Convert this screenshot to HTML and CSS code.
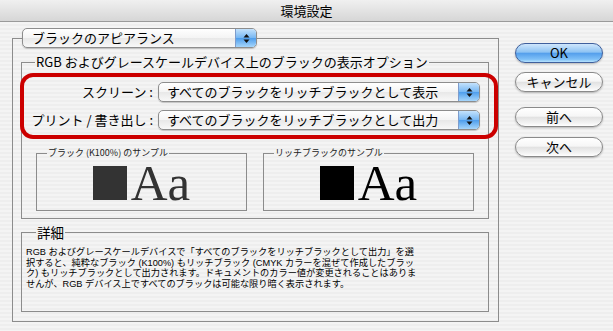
FILE: index.html
```html
<!DOCTYPE html>
<html lang="ja">
<head>
  <meta charset="UTF-8">
  <title>環境設定</title>
  <link rel="stylesheet" href="styles.css">
</head>
<body>
  <div class="titlebar">環境設定</div>

  <div class="content">
    <fieldset class="panel">
      <legend class="panel-legend">
        <div class="popup popup-section">
          <span class="popup-text">ブラックのアピアランス</span>
          <span class="popup-arrows">
            <svg width="7" height="11" viewBox="0 0 7 11"><polygon points="0.5,4.5 3.5,1 6.5,4.5"/><polygon points="0.5,6.5 3.5,10 6.5,6.5"/></svg>
          </span>
        </div>
      </legend>

      <fieldset class="group group-options">
        <legend>RGB およびグレースケールデバイス上のブラックの表示オプション</legend>

        <div class="option-rows">
          <div class="option-row">
            <span class="option-label">スクリーン :</span>
            <div class="popup popup-option">
              <span class="popup-text">すべてのブラックをリッチブラックとして表示</span>
              <span class="popup-arrows">
                <svg width="7" height="11" viewBox="0 0 7 11"><polygon points="0.5,4.5 3.5,1 6.5,4.5"/><polygon points="0.5,6.5 3.5,10 6.5,6.5"/></svg>
              </span>
            </div>
          </div>
          <div class="option-row">
            <span class="option-label">プリント / 書き出し :</span>
            <div class="popup popup-option">
              <span class="popup-text">すべてのブラックをリッチブラックとして出力</span>
              <span class="popup-arrows">
                <svg width="7" height="11" viewBox="0 0 7 11"><polygon points="0.5,4.5 3.5,1 6.5,4.5"/><polygon points="0.5,6.5 3.5,10 6.5,6.5"/></svg>
              </span>
            </div>
          </div>
          <div class="highlight"></div>
        </div>

        <div class="samples">
          <fieldset class="sample sample-k100">
            <legend>ブラック (K100%) のサンプル</legend>
            <div class="swatch"><span class="square"></span><span class="aa">Aa</span></div>
          </fieldset>
          <fieldset class="sample sample-rich">
            <legend>リッチブラックのサンプル</legend>
            <div class="swatch"><span class="square"></span><span class="aa">Aa</span></div>
          </fieldset>
        </div>
      </fieldset>

      <fieldset class="group group-details">
        <legend>詳細</legend>
        <p class="details-text">
          RGB およびグレースケールデバイスで「すべてのブラックをリッチブラックとして出力」を選<br>
          択すると、純粋なブラック (K100%) もリッチブラック (CMYK カラーを混ぜて作成したブラッ<br>
          ク) もリッチブラックとして出力されます。ドキュメントのカラー値が変更されることはありま<br>
          せんが、RGB デバイス上ですべてのブラックは可能な限り暗く表示されます。
        </p>
      </fieldset>
    </fieldset>

    <div class="buttons">
      <button class="btn btn-default">OK</button>
      <button class="btn btn-cancel">キャンセル</button>
      <button class="btn btn-prev">前へ</button>
      <button class="btn btn-next">次へ</button>
    </div>
  </div>
</body>
</html>
```

FILE: styles.css
```css
body {
  margin: 0;
  width: 613px;
  height: 331px;
  overflow: hidden;
  font-family: "Noto Sans CJK JP", "Noto Sans", sans-serif;
  color: #000;
  background: repeating-linear-gradient(#eeeeee 0 2px, #f4f4f4 2px 4px);
}

.titlebar {
  height: 21px;
  border-bottom: 1px solid #9a9a9a;
  background: linear-gradient(#f0f0f0, #d6d6d6);
  font-size: 13px;
  line-height: 21px;
  text-align: center;
}

.content {
  display: flex;
  align-items: flex-start;
}

fieldset {
  margin: 0;
  padding: 0;
  min-width: 0;
  border: 1px solid #8c8c8c;
}

legend {
  padding: 0 1px;
}

/* outer frame */
.panel {
  width: 487px;
  box-sizing: border-box;
  margin: 6px 0 0 12px;
  padding: 0 9px 9px 8px;
}

.panel-legend {
  padding: 0;
  margin-left: 1px;
}

/* popup menus */
.popup {
  display: flex;
  height: 20px;
  box-sizing: border-box;
  border: 1px solid #8d8d8d;
  border-radius: 5px;
  overflow: hidden;
  background: linear-gradient(#ffffff, #f4f4f4 50%, #e8e8e8 52%, #f8f8f8);
  box-shadow: 0 1px 1px rgba(0, 0, 0, 0.2);
}

.popup-section {
  width: 235px;
}

.popup-option {
  width: 322px;
}

.popup-text {
  flex: 1;
  padding-left: 9px;
  font-size: 13px;
  line-height: 18px;
  white-space: nowrap;
}

.popup-option .popup-text {
  padding-left: 8px;
}

.popup-arrows {
  width: 20px;
  display: flex;
  align-items: center;
  justify-content: center;
  border-left: 1px solid #7d9ccc;
  background: linear-gradient(#c4e2fc, #79b8f3 48%, #4f9eec 52%, #a6d6fb);
}

.popup-arrows svg {
  fill: #111;
}

/* groups */
.group legend {
  font-size: 13px;
  line-height: 16px;
  white-space: nowrap;
}

.group-options {
  margin-top: 6px;
  padding: 0 0 7px;
}

.group-options > legend {
  margin-left: 13px;
}

.option-rows {
  position: relative;
  margin-top: 3px;
  padding: 9px 0;
  display: flex;
  flex-direction: column;
  gap: 8px;
}

.option-row {
  display: flex;
  align-items: center;
  gap: 5px;
}

.option-label {
  width: 131px;
  text-align: right;
  font-size: 13px;
  line-height: 20px;
  white-space: nowrap;
}

.highlight {
  position: absolute;
  top: 0;
  bottom: 0;
  left: -2px;
  right: -10px;
  border: 4px solid #cc0000;
  border-radius: 13px;
}

.samples {
  display: flex;
  gap: 16px;
  margin-top: 9px;
  padding: 0 14px;
}

.sample {
  width: 211px;
  box-sizing: border-box;
  padding: 8px 0 10px;
}

.sample legend {
  margin-left: 10px;
  font-size: 9px;
  line-height: 10px;
  color: #222;
  white-space: nowrap;
}

.swatch {
  display: flex;
  align-items: flex-end;
  justify-content: center;
  gap: 4px;
  height: 34px;
}

.square {
  width: 34px;
  height: 34px;
  background: #333;
}

.aa {
  font-family: "Liberation Serif", serif;
  font-size: 51px;
  line-height: 34px;
  color: #333;
}

.sample-rich .square {
  background: #000;
}

.sample-rich .aa {
  color: #000;
}

.group-details {
  margin-top: 5px;
  padding: 7px 4px 22px;
}

.group-details > legend {
  margin-left: 10px;
  font-size: 13.5px;
}

.details-text {
  margin: 0;
  font-family: "Liberation Sans", "Noto Sans CJK JP", sans-serif;
  font-size: 9.2px;
  line-height: 10.5px;
  white-space: nowrap;
  color: #000;
}

/* buttons */
.buttons {
  display: flex;
  flex-direction: column;
  margin-left: 16px;
  padding-top: 21px;
}

.btn {
  width: 88px;
  height: 20px;
  padding: 0;
  border: 1px solid #8a8a8a;
  border-radius: 10px;
  font-family: inherit;
  font-size: 13px;
  line-height: 18px;
  color: #000;
  background: linear-gradient(#ffffff, #f6f6f6 45%, #e2e2e2 52%, #f4f4f4 85%, #ffffff);
  box-shadow: 0 1px 2px rgba(0, 0, 0, 0.25);
}

.btn-default {
  border-color: #3f5f9c;
  background: linear-gradient(#cfe6fc, #8ec3f3 45%, #559fec 52%, #7fc0f7 85%, #b6e2fd);
}

.btn-cancel {
  margin-top: 9px;
}

.btn-prev {
  margin-top: 15px;
}

.btn-next {
  margin-top: 10px;
}
```
